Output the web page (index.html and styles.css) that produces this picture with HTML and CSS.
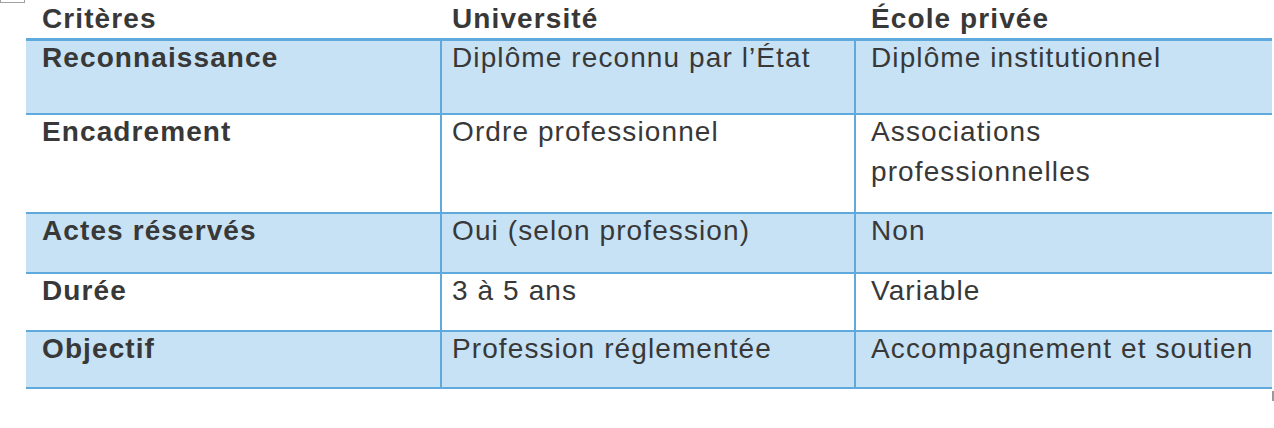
FILE: index.html
```html
<!DOCTYPE html>
<html lang="fr">
<head>
<meta charset="utf-8">
<link rel="stylesheet" href="styles.css">
</head>
<body>
<div class="page">
  <div class="handle"></div>
  <div class="table">
    <div class="row head">
      <div class="cell c1"><p class="t">Critères</p></div>
      <div class="cell c2"><p class="t">Université</p></div>
      <div class="cell c3"><p class="t">École privée</p></div>
    </div>
    <div class="row fill r1">
      <div class="cell c1 b"><p class="t">Reconnaissance</p></div>
      <div class="cell c2"><p class="t">Diplôme reconnu par l’État</p></div>
      <div class="cell c3"><p class="t">Diplôme institutionnel</p></div>
    </div>
    <div class="row r2">
      <div class="cell c1 b"><p class="t">Encadrement</p></div>
      <div class="cell c2"><p class="t">Ordre professionnel</p></div>
      <div class="cell c3"><p class="t">Associations<br>professionnelles</p></div>
    </div>
    <div class="row fill r3">
      <div class="cell c1 b"><p class="t">Actes réservés</p></div>
      <div class="cell c2"><p class="t">Oui (selon profession)</p></div>
      <div class="cell c3"><p class="t">Non</p></div>
    </div>
    <div class="row r4">
      <div class="cell c1 b"><p class="t">Durée</p></div>
      <div class="cell c2"><p class="t">3 à 5 ans</p></div>
      <div class="cell c3"><p class="t">Variable</p></div>
    </div>
    <div class="row fill r5">
      <div class="cell c1 b"><p class="t">Objectif</p></div>
      <div class="cell c2"><p class="t">Profession réglementée</p></div>
      <div class="cell c3"><p class="t">Accompagnement et soutien</p></div>
    </div>
  </div>
  <div class="resize"></div>
</div>
</body>
</html>
```
FILE: styles.css
```css
html, body {
  margin: 0;
  padding: 0;
  background: #ffffff;
}
.page {
  position: relative;
  width: 1274px;
  height: 428px;
  overflow: hidden;
  font-family: "Liberation Sans", Arial, sans-serif;
  font-size: 28px;
  line-height: 40px;
  letter-spacing: 1.1px;
  color: #383838;
}
.handle {
  position: absolute;
  left: 0;
  top: -13px;
  width: 23px;
  height: 14px;
  border: 1px solid #a0a0a0;
}
.resize {
  position: absolute;
  left: 1272px;
  top: 391px;
  width: 2px;
  height: 10px;
  background: #9a9a9a;
}
.table {
  margin-left: 26px;
  width: 1246px;
}
.row {
  display: grid;
  grid-template-columns: 414px 414px 418px;
  border-bottom: 2px solid #5fa9dc;
}
.row.fill {
  background: #c7e2f4;
}
.t {
  margin: -3px 0 0;
}
.head .t {
  margin-top: -1px;
}
.c1 {
  padding-left: 16px;
}
.c2 {
  padding-left: 10px;
  border-left: 2px solid #5fa9dc;
}
.c3 {
  padding-left: 15px;
  border-left: 2px solid #5fa9dc;
}
.head {
  height: 38px;
  border-bottom-width: 3px;
  font-weight: bold;
}
.head .cell {
  border-left-color: transparent;
}
.b {
  font-weight: bold;
}
.r1 { height: 72px; }
.r2 { height: 97px; }
.r3 { height: 58px; }
.r4 { height: 56px; }
.r5 { height: 55px; }
```
